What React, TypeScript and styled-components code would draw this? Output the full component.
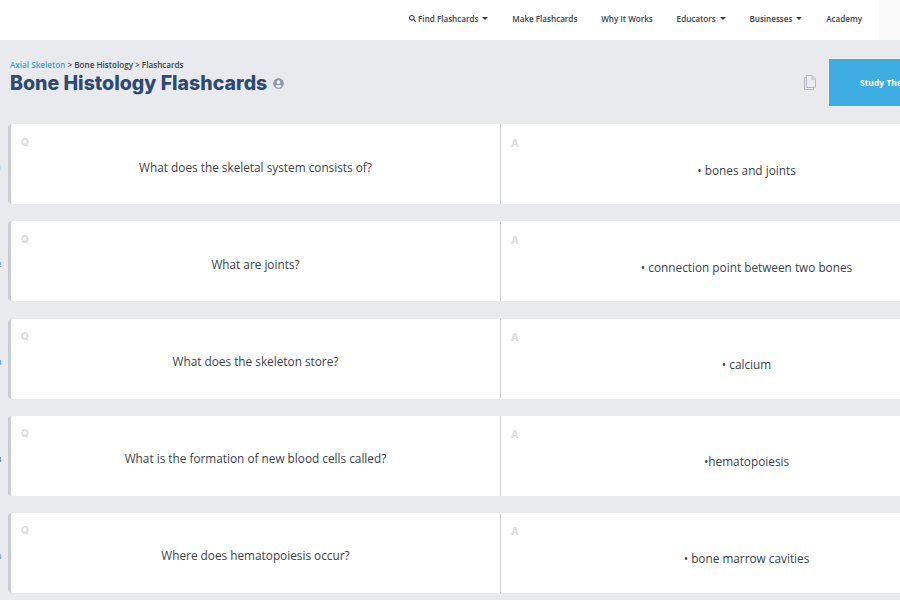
import { createGlobalStyle, styled } from 'styled-components'
import { FaSearch, FaUserCircle } from 'react-icons/fa'

const CARDS = [
  { q: 'What does the skeletal system consists of?', a: '• bones and joints' },
  { q: 'What are joints?', a: '• connection point between two bones' },
  { q: 'What does the skeleton store?', a: '• calcium' },
  { q: 'What is the formation of new blood cells called?', a: '•hematopoiesis' },
  { q: 'Where does hematopoiesis occur?', a: '• bone marrow cavities' },
]

const NAV = [
  { label: 'Find Flashcards', caret: true, search: true },
  { label: 'Make Flashcards' },
  { label: 'Why It Works' },
  { label: 'Educators', caret: true },
  { label: 'Businesses', caret: true },
  { label: 'Academy' },
]

const GlobalStyle = createGlobalStyle`
  html, body {
    margin: 0;
    height: 600px;
    overflow: hidden;
    background: #e9eaee;
    font-family: "Open Sans", sans-serif;
  }
`

const Page = styled.div`
  width: 900px;
  height: 600px;
  overflow: hidden;
`

const TopBar = styled.header`
  height: 40px;
  background: #fff;
  display: flex;
  justify-content: flex-end;
  padding-right: 38px;
  box-shadow: inset -21px 0 0 #fafafa;
`

const NavList = styled.nav`
  display: flex;
  align-items: center;
  gap: 23.8px;
  height: 37px;
`

const NavItem = styled.a`
  display: flex;
  align-items: center;
  gap: 2px;
  font-size: 8.1px;
  font-weight: 600;
  color: #3a3f4a;
`

const Caret = styled.span`
  width: 0;
  height: 0;
  margin-left: 2px;
  border-left: 3px solid transparent;
  border-right: 3px solid transparent;
  border-top: 3px solid #3a3f4a;
`

const Header = styled.section`
  height: 84.4px;
  display: flex;
  justify-content: space-between;
  padding-left: 10px;
`

const TitleBlock = styled.div`
  padding-top: 19px;
`

const Crumbs = styled.div`
  font-size: 8.15px;
  font-weight: 600;
  line-height: 12px;
  color: #3a3f4a;
`

const CrumbLink = styled.span`
  color: #2fa3dc;
`

const Title = styled.h1`
  margin: 0;
  display: flex;
  align-items: center;
  gap: 6px;
  font-family: Inter, sans-serif;
  font-size: 19.55px;
  font-weight: 800;
  line-height: 25px;
  color: #2d4a70;
`

const Actions = styled.div`
  display: flex;
  align-items: flex-start;
  gap: 12px;
  padding-top: 18px;
`

const CopyIcon = styled.svg`
  width: 12px;
  height: 15px;
  margin-top: 17px;
  fill: none;
  stroke: #b3bac4;
  stroke-width: 1;
`

const StudyButton = styled.button`
  box-sizing: border-box;
  width: 72px;
  height: 49px;
  border: 1px solid #f2f3f5;
  border-right: 0;
  padding: 0 0 0 31px;
  background: #3eaee2;
  color: #fff;
  font: 700 8.5px "Open Sans", sans-serif;
  white-space: nowrap;
  overflow: hidden;
  text-align: left;
`

const CardList = styled.div`
  display: flex;
  flex-direction: column;
  gap: 17.1px;
  padding-left: 8px;
`

const Row = styled.article`
  position: relative;
  width: 984px;
  height: 80px;
  display: flex;
  background: #fff;
  border-left: 3px solid #c9ccd0;
  border-radius: 4px 0 0 4px;
`

const RowNumber = styled.span`
  position: absolute;
  left: -14px;
  top: 37px;
  font-size: 8px;
  color: #2d6aa0;
`

const Side = styled.div<{ $answer?: boolean }>`
  position: relative;
  box-sizing: border-box;
  display: flex;
  align-items: center;
  justify-content: center;
  font-size: 11.8px;
  color: #3a3f4a;
  width: ${(p) => (p.$answer ? '492px' : '490px')};
  padding-top: ${(p) => (p.$answer ? '11px' : '5px')};
  padding-right: ${(p) => (p.$answer ? '1px' : '0')};
  border-right: ${(p) => (p.$answer ? '0' : '1px solid #cfd0d4')};
`

const Letter = styled.span<{ $answer?: boolean }>`
  position: absolute;
  left: 10px;
  top: ${(p) => (p.$answer ? '12.5px' : '11.5px')};
  font-family: Inter, sans-serif;
  font-size: 10px;
  font-weight: 800;
  color: #dcdde0;
`

export default function App() {
  return (
    <Page>
      <GlobalStyle />
      <TopBar>
        <NavList>
          {NAV.map((item) => (
            <NavItem key={item.label}>
              {item.search && <FaSearch size={7} />}
              {item.label}
              {item.caret && <Caret />}
            </NavItem>
          ))}
        </NavList>
      </TopBar>
      <Header>
        <TitleBlock>
          <Crumbs>
            <CrumbLink>Axial Skeleton</CrumbLink> &gt; Bone Histology &gt; Flashcards
          </Crumbs>
          <Title>
            Bone Histology Flashcards
            <FaUserCircle size={11} color="#8e99a8" />
          </Title>
        </TitleBlock>
        <Actions>
          <CopyIcon viewBox="0 0 12 15">
            <path d="M2.5 0.5H8L11.5 4V12.5H2.5Z" />
            <path d="M8 0.5V4H11.5" />
            <path d="M2.5 2.5H0.5V14.5H9.5V12.5" />
          </CopyIcon>
          <StudyButton>Study These Flashcards</StudyButton>
        </Actions>
      </Header>
      <CardList>
        {CARDS.map((card, i) => (
          <Row key={card.q}>
            <RowNumber>{i + 1}</RowNumber>
            <Side>
              <Letter>Q</Letter>
              {card.q}
            </Side>
            <Side $answer>
              <Letter $answer>A</Letter>
              {card.a}
            </Side>
          </Row>
        ))}
      </CardList>
    </Page>
  )
}
